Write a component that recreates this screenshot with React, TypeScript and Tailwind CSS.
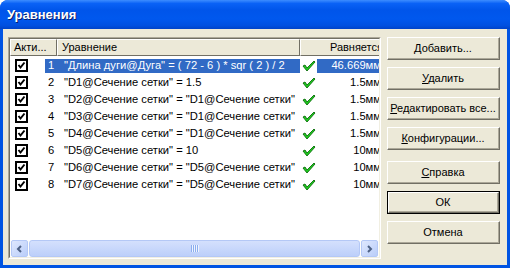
import React from 'react';

interface Row {
  n: number;
  eq: string;
  val: string;
}

const rows: Row[] = [
  { n: 1, eq: '"Длина дуги@Дуга" = ( 72 - 6 ) * sqr ( 2 ) / 2', val: '46.669мм' },
  { n: 2, eq: '"D1@Сечение сетки" = 1.5', val: '1.5мм' },
  { n: 3, eq: '"D2@Сечение сетки" = "D1@Сечение сетки"', val: '1.5мм' },
  { n: 4, eq: '"D3@Сечение сетки" = "D1@Сечение сетки"', val: '1.5мм' },
  { n: 5, eq: '"D4@Сечение сетки" = "D1@Сечение сетки"', val: '1.5мм' },
  { n: 6, eq: '"D5@Сечение сетки" = 10', val: '10мм' },
  { n: 7, eq: '"D6@Сечение сетки" = "D5@Сечение сетки"', val: '10мм' },
  { n: 8, eq: '"D7@Сечение сетки" = "D5@Сечение сетки"', val: '10мм' },
];

const CheckBox = () => (
  <svg width="13" height="13" viewBox="0 0 13 13" className="shrink-0">
    <rect x="1" y="1" width="11" height="11" fill="#fff" stroke="#000" strokeWidth="2" />
    <polyline points="3.5,6 5.5,8.5 9.5,3.5" fill="none" stroke="#000" strokeWidth="2" />
  </svg>
);

const GreenCheck = () => (
  <svg width="14" height="12" viewBox="0 0 14 12" className="shrink-0">
    <path d="M1 6 L3 5 L5 8 L12 1 L13 2 L5 11 Z" fill="#1ecb1e" stroke="#0b6b0b" strokeWidth="0.9" strokeLinejoin="round" />
  </svg>
);

const Btn = ({ children, def, className = '' }: { children: React.ReactNode; def?: boolean; className?: string }) => (
  <div className={`h-[23px] ${def ? 'border border-black' : ''} ${className}`}>
    <div className="h-full border-t border-l border-white border-r border-b border-r-[#716f64] border-b-[#716f64] bg-[#ece9d8]">
      <div className="h-full flex items-center justify-center border-r border-b border-r-[#aca899] border-b-[#aca899] text-[11px] text-black">
        {children}
      </div>
    </div>
  </div>
);

const Arrow = ({ dir }: { dir: 'l' | 'r' }) => (
  <div className="w-[17px] h-[17px] shrink-0 rounded-[2px] border border-[#b4c8f6] bg-[linear-gradient(135deg,#dfe8fe,#b9cdf9)] flex items-center justify-center">
    <svg width="7" height="8" viewBox="0 0 7 8">
      {dir === 'l' ? (
        <polyline points="5,1 2,4 5,7" fill="none" stroke="#4d6185" strokeWidth="2" />
      ) : (
        <polyline points="2,1 5,4 2,7" fill="none" stroke="#4d6185" strokeWidth="2" />
      )}
    </svg>
  </div>
);

export default function App() {
  return (
    <div className="w-[510px] h-[268px] bg-white font-['Liberation_Sans',Arial,sans-serif]">
      <div className="w-full h-full rounded-t-[8px] bg-[#0054e3] flex flex-col overflow-hidden">
        <div className="h-[29px] shrink-0 flex items-center pl-[7px] bg-[linear-gradient(to_bottom,#3d8dff_0%,#0a62f6_12%,#0055ea_35%,#0058ee_65%,#0050e0_88%,#0043c8_100%)]">
          <span className="text-white font-bold text-[13px] [text-shadow:1px_1px_0_#0a1f6e] pt-[1px]">Уравнения</span>
        </div>
        <div className="flex-1 mx-[3px] mb-[3px] bg-[#ece9d8] flex pt-[8px] pl-[5px] pr-[7px] gap-[6px]">
          {/* list */}
          <div className="w-[373px] h-[222px] border border-t-[#aca899] border-l-[#aca899] border-b-white border-r-white">
            <div className="w-full h-full border border-t-[#716f64] border-l-[#716f64] border-b-[#f1efe2] border-r-[#f1efe2] bg-white flex flex-col overflow-hidden text-[11px] text-black">
              <div className="h-[17px] shrink-0 flex bg-[#ece9d8] whitespace-nowrap">
                <div className="w-[47px] shrink-0 border-t border-l border-white border-r border-b border-r-[#716f64] border-b-[#716f64] flex items-center pl-[3px]">Акти...</div>
                <div className="w-[243px] shrink-0 border-t border-l border-white border-r border-b border-r-[#716f64] border-b-[#716f64] flex items-center pl-[4px]">Уравнение</div>
                <div className="w-[90px] shrink-0 border-t border-l border-white border-b border-b-[#716f64] flex items-center justify-end pr-[7px]">Равняется</div>
              </div>
              <div className="flex-1 flex flex-col whitespace-nowrap pt-[1px] text-[11.2px]">
                {rows.map((r) => (
                  <div key={r.n} className="h-[17px] flex items-center">
                    <div className="w-[35px] shrink-0 pl-[5px] flex items-center">
                      <CheckBox />
                    </div>
                    <div className={`w-[255px] shrink-0 h-[14px] flex items-center ${r.n === 1 ? 'bg-[#316ac5] text-white' : ''}`}>
                      <span className="w-[19px] pl-[3px] shrink-0">{r.n}</span>
                      <span>{r.eq}</span>
                    </div>
                    <div className="w-[17px] shrink-0 flex items-center pl-[2px]">
                      <GreenCheck />
                    </div>
                    <div className={`w-[68px] shrink-0 h-[14px] flex items-center justify-end pr-[4px] ${r.n === 1 ? 'bg-[#316ac5] text-white' : ''}`}>
                      {r.val}
                    </div>
                  </div>
                ))}
              </div>
              <div className="h-[17px] shrink-0 flex bg-[#fefefb] px-[1px]">
                <Arrow dir="l" />
                <div className="flex-1 mx-[1px] rounded-[3px] border border-[#b4c8f6] bg-[linear-gradient(to_bottom,#d4e0fd,#bccffa)] flex items-center justify-center">
                  <div className="flex gap-[1px]">
                    {[0, 1, 2, 3].map((i) => (
                      <div key={i} className="w-[1px] h-[7px] bg-[#8caeef] shadow-[1px_0_0_#eef4fe]" />
                    ))}
                  </div>
                </div>
                <Arrow dir="r" />
              </div>
            </div>
          </div>
          {/* buttons */}
          <div className="flex-1 flex flex-col gap-[7px]">
            <Btn>
              <span><u>Д</u>обавить...</span>
            </Btn>
            <Btn>
              <span><u>У</u>далить</span>
            </Btn>
            <Btn>
              <span><u>Р</u>едактировать все...</span>
            </Btn>
            <Btn>
              <span><u>К</u>онфигурации...</span>
            </Btn>
            <Btn className="mt-[4px]">
              <span><u>С</u>правка</span>
            </Btn>
            <Btn def>
              <span>ОК</span>
            </Btn>
            <Btn>
              <span>Отмена</span>
            </Btn>
          </div>
        </div>
      </div>
    </div>
  );
}
